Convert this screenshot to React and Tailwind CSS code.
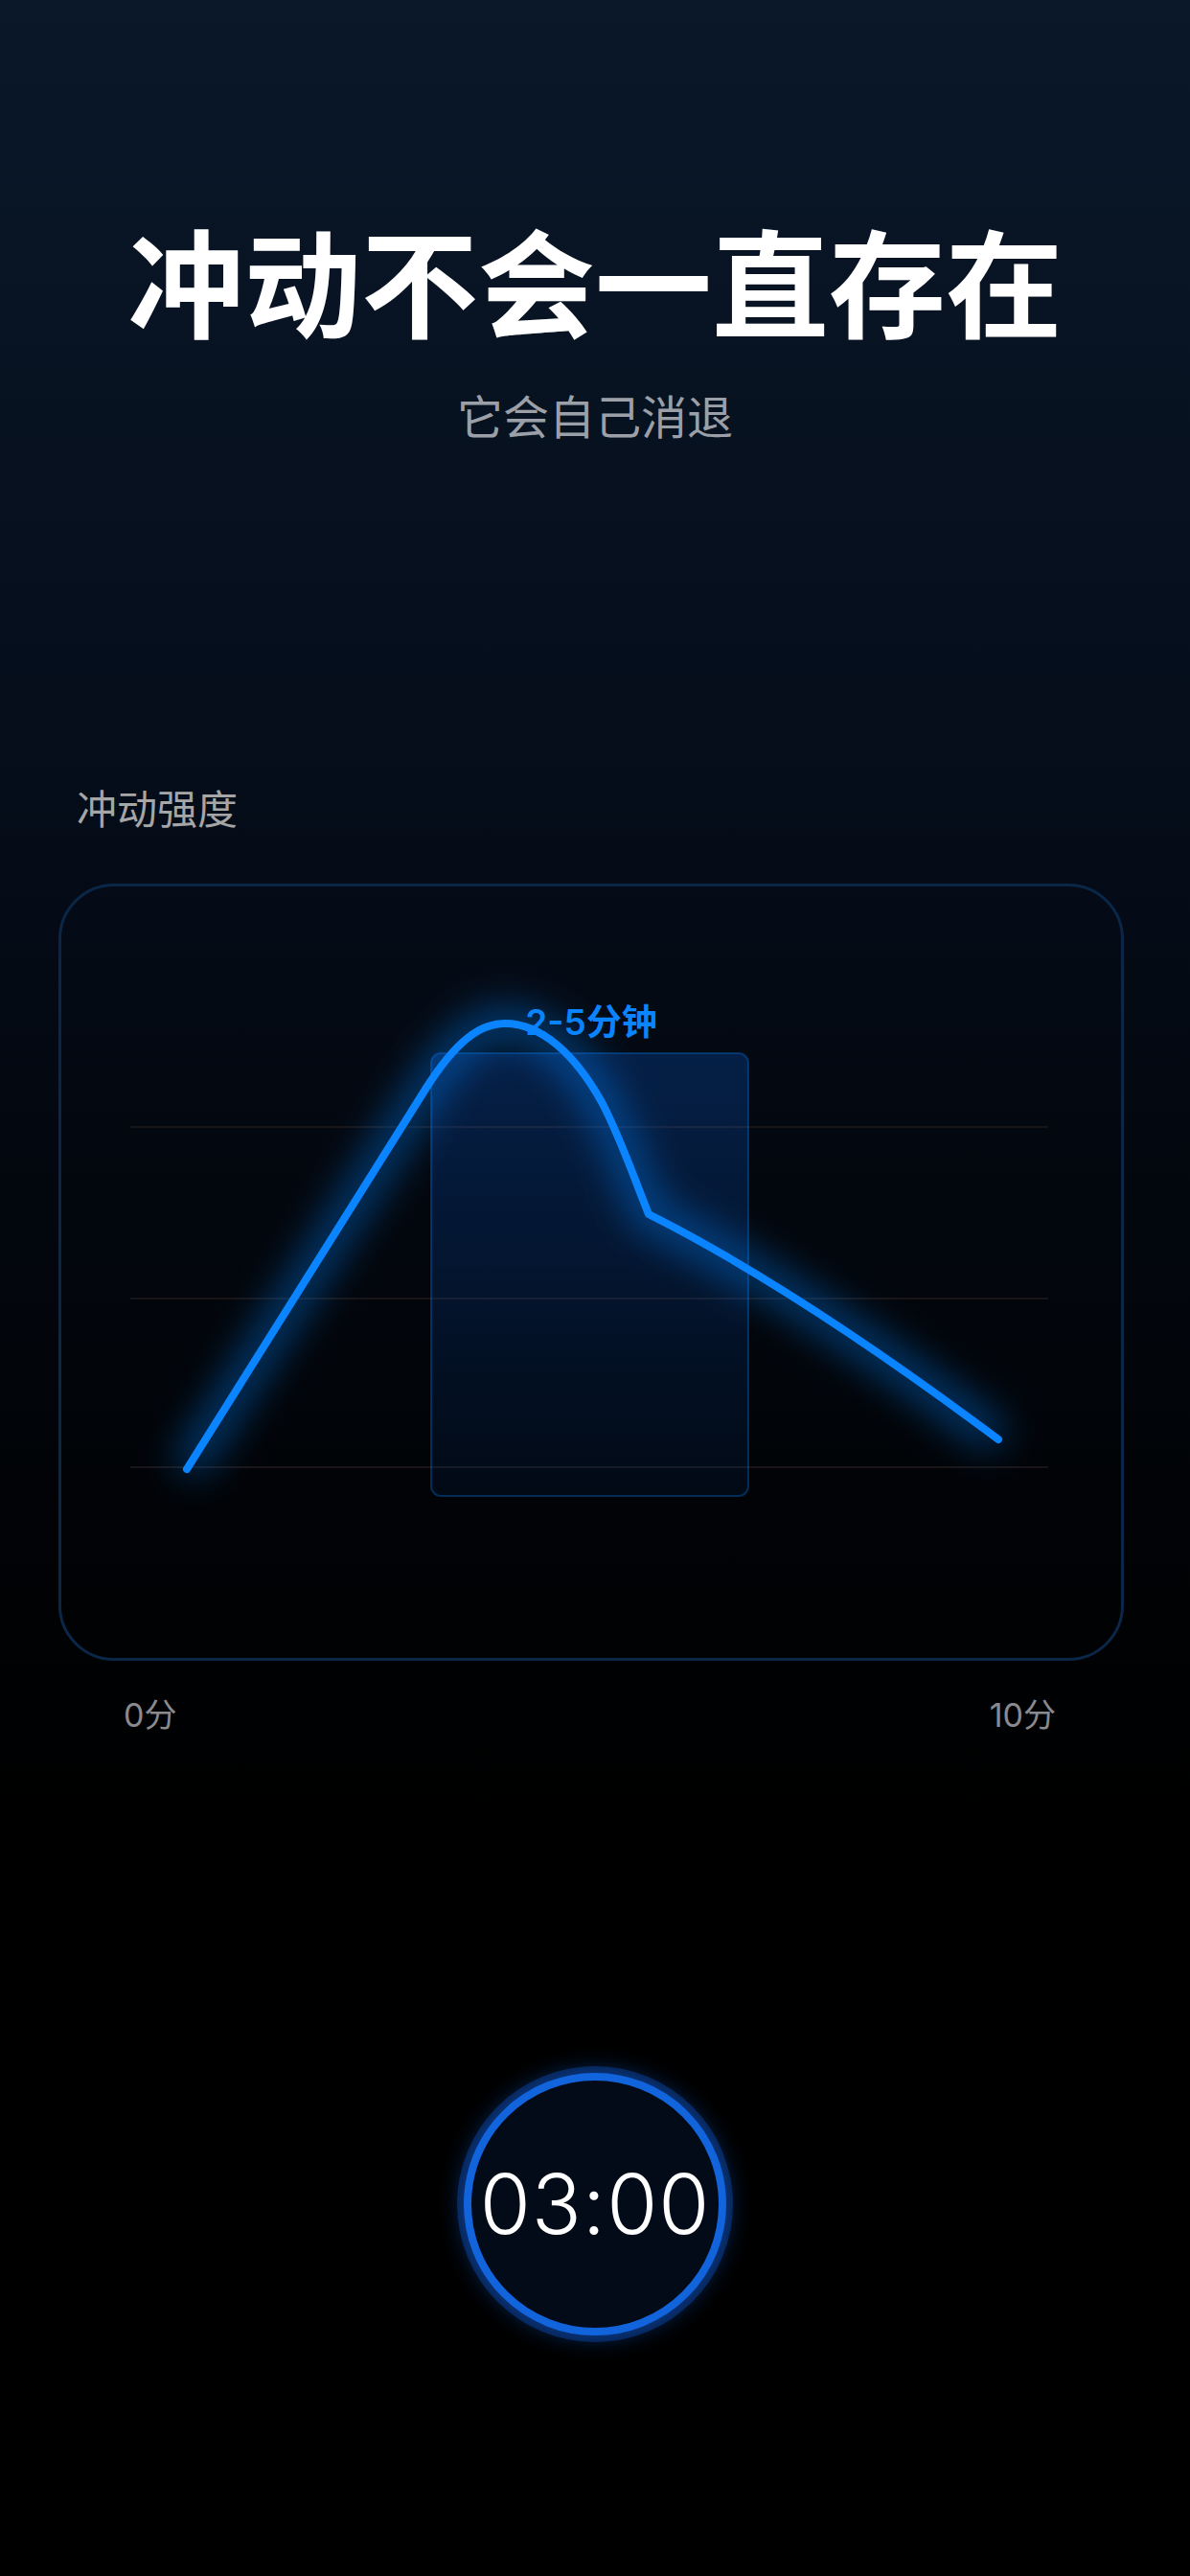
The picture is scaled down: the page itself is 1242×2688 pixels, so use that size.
const GRID = [254, 433, 609];

const CURVE =
  "M134,611 L384,213 C414,166 439,146 466,146 C504,146 539,178 567,228 C587,266 601,308 616,345 Q771,423 981,580";

const ImpulseChart = () => (
  <div className="relative w-[1112px] h-[811px] ml-[61px] mt-[56px] rounded-[58px] border-[3px] border-[#0b2748]">
    <div className="absolute left-[553px] top-[141px] -translate-x-1/2 -translate-y-1/2 text-[37px] leading-none font-semibold text-[#0a84ff] whitespace-nowrap">
      2-5分钟
    </div>
    <svg className="absolute -left-[3px] -top-[3px]" width="1112" height="811" viewBox="0 0 1112 811">
      <defs>
        <linearGradient id="zone" x1="0" y1="0" x2="0" y2="1">
          <stop offset="0" stopColor="#0a6eff" stopOpacity="0.22" />
          <stop offset="1" stopColor="#0a6eff" stopOpacity="0.06" />
        </linearGradient>
        <filter id="glow" x="-20%" y="-20%" width="140%" height="140%">
          <feGaussianBlur stdDeviation="20" />
        </filter>
      </defs>
      {GRID.map((y) => (
        <line key={y} x1="75" x2="1033" y1={y} y2={y} stroke="#191516" strokeWidth="2" />
      ))}
      <rect x="389" y="177" width="331" height="462" rx="10" fill="url(#zone)" stroke="#0a84ff" strokeOpacity="0.3" strokeWidth="2" />
      <path d={CURVE} fill="none" stroke="#0a84ff" strokeOpacity="0.5" strokeWidth="30" filter="url(#glow)" />
      <path d={CURVE} fill="none" stroke="#0a84ff" strokeWidth="8" strokeLinecap="round" strokeLinejoin="round" />
    </svg>
  </div>
);

export default function App() {
  return (
    <div
      className="w-[1242px] h-[2688px] flex flex-col bg-[linear-gradient(180deg,#0a1829_0%,#050d1a_30%,#010306_58%,#000_72%)]"
      style={{ fontFamily: '"Inter", "Noto Sans CJK SC", sans-serif' }}
    >
      <h1 className="pt-[238px] text-center text-[122px] leading-none font-bold text-white">冲动不会一直存在</h1>
      <p className="mt-[52px] text-center text-[48px] leading-none text-[#9ba0a8]">它会自己消退</p>

      <p className="mt-[364px] pl-[80px] text-[42px] leading-none text-[#a6a6a6]">冲动强度</p>

      <ImpulseChart />

      <div className="mt-[40px] flex justify-between pl-[129px] pr-[140px] text-[34px] leading-none text-[#8a8a8e]">
        <span>0分</span>
        <span>10分</span>
      </div>

      <div className="mt-[356px] flex justify-center">
        <div className="w-[274px] h-[274px] rounded-full border-[8px] border-[#1264dc] bg-[#030a18] flex items-center justify-center shadow-[0_0_0_7px_rgba(18,90,210,0.35),0_0_26px_rgba(18,100,230,0.55)]">
          <span className="text-[86px] leading-none font-light text-white tracking-[1px]">03:00</span>
        </div>
      </div>
    </div>
  );
}
